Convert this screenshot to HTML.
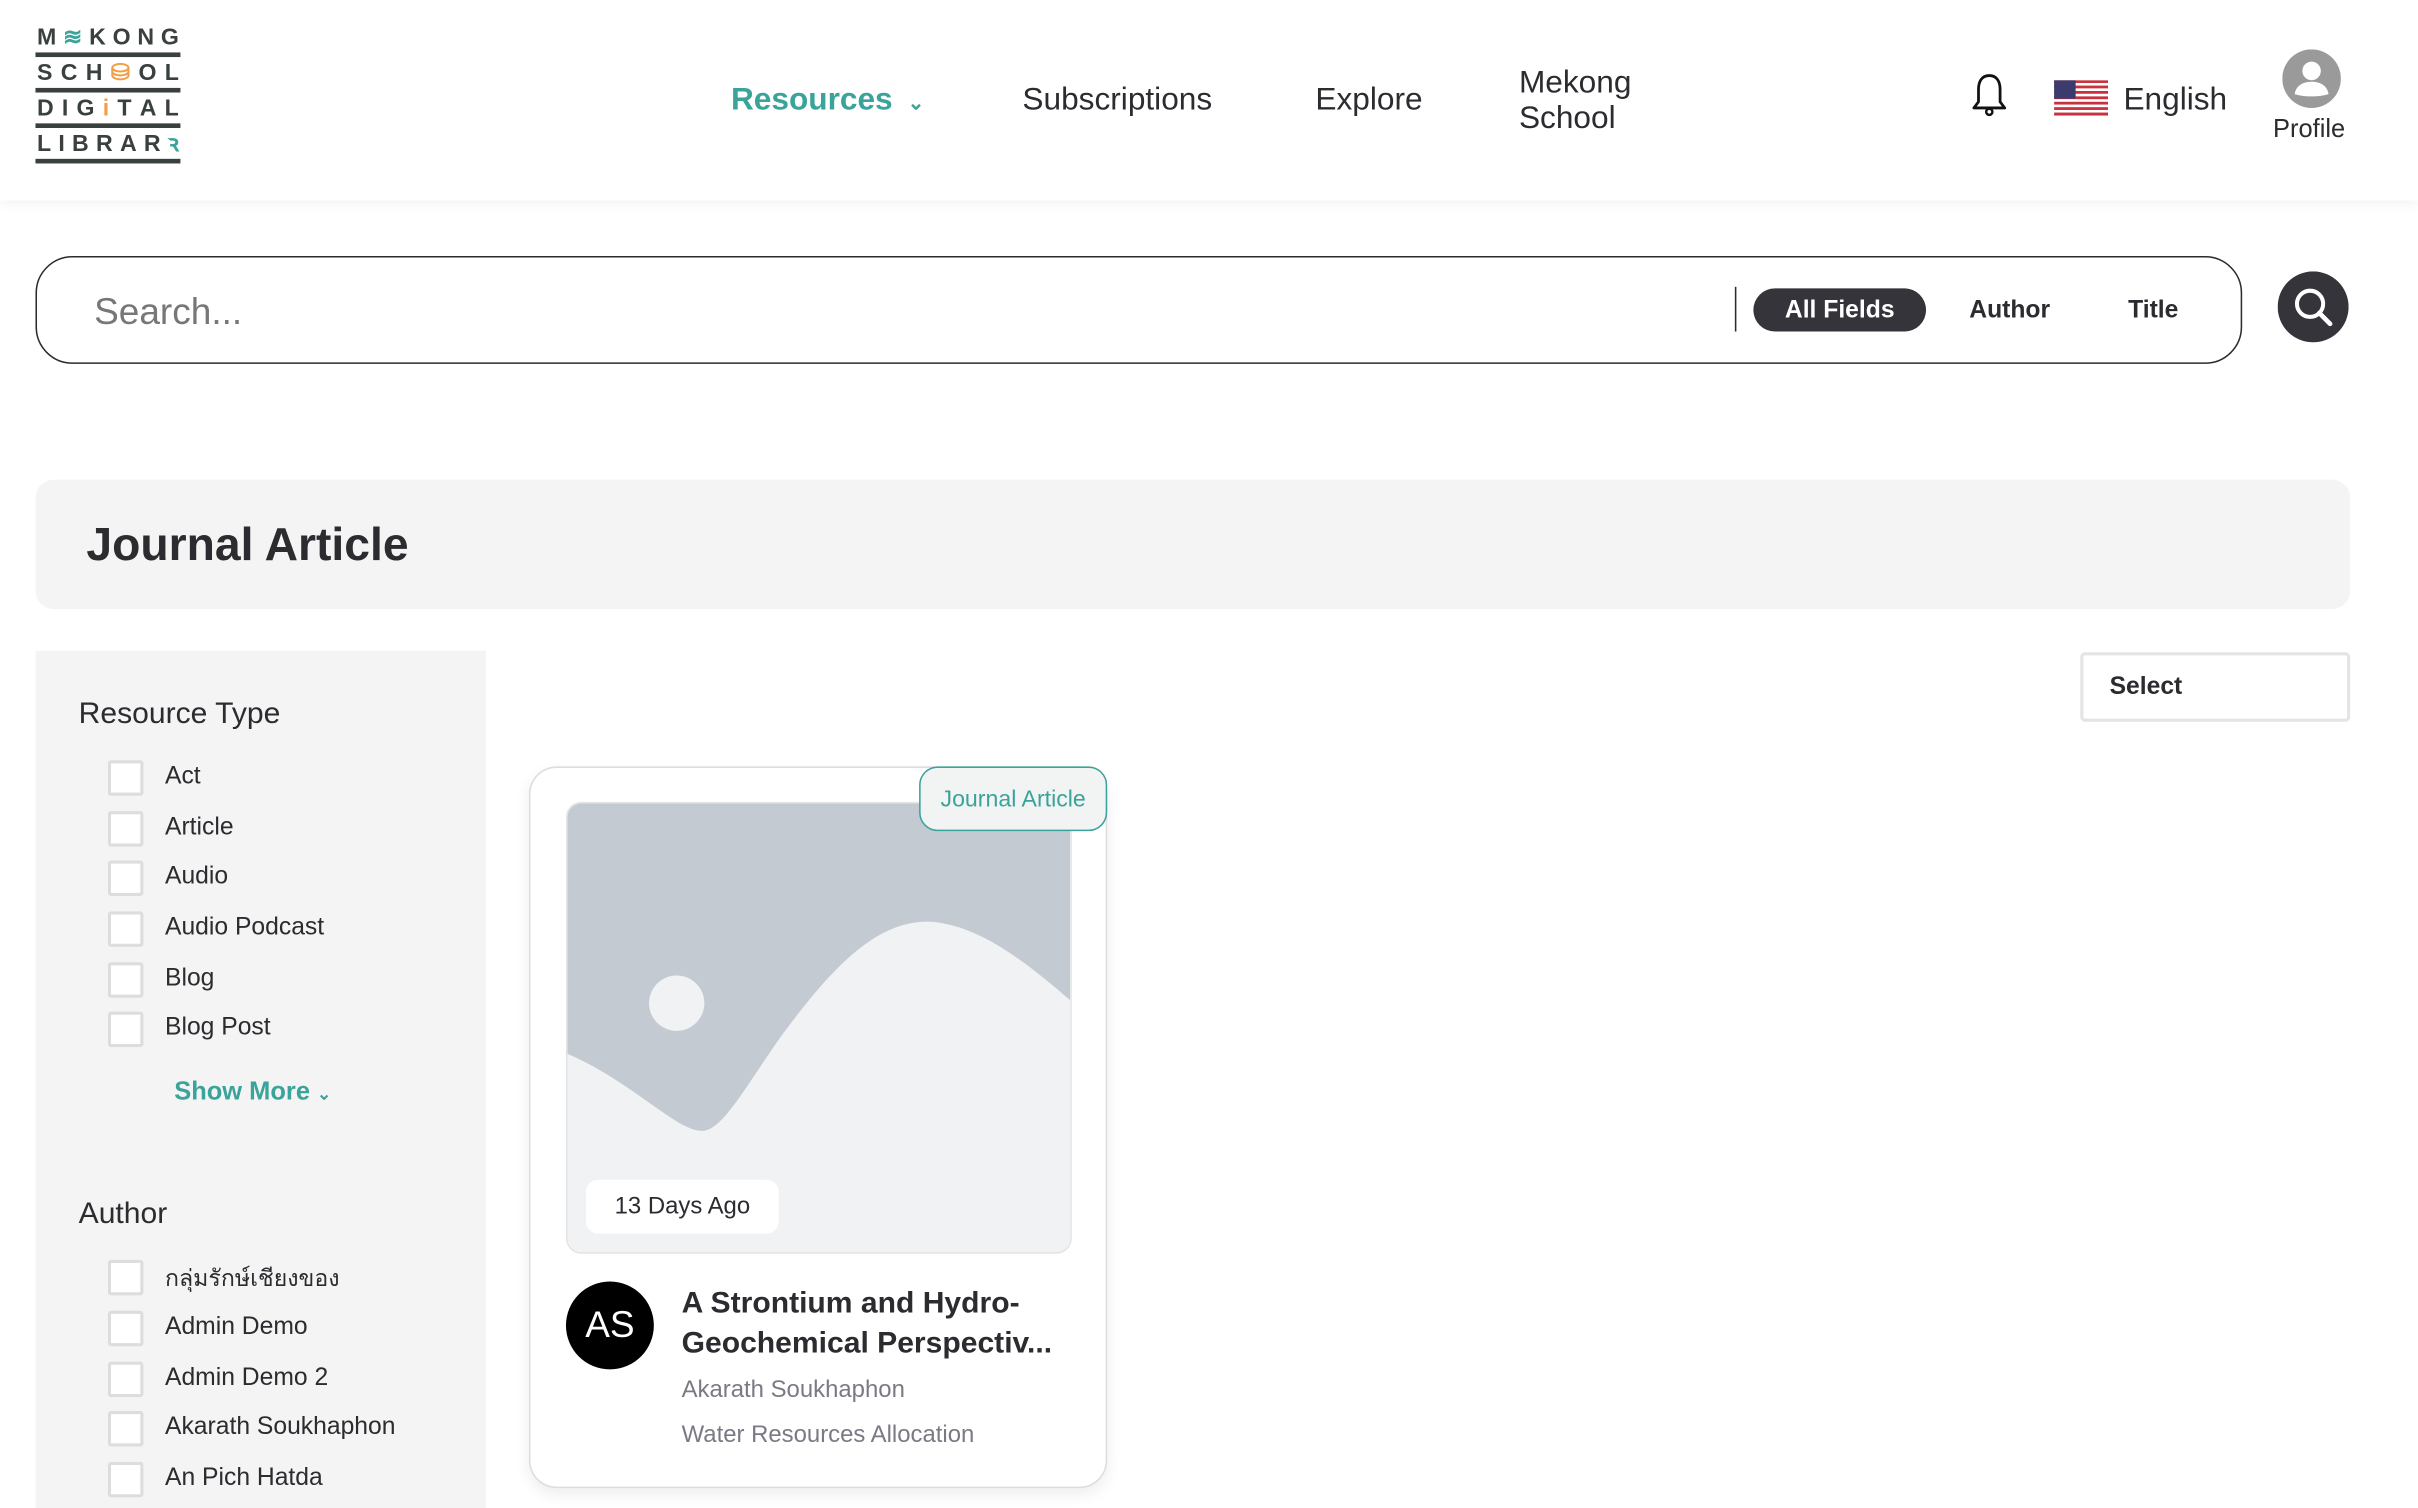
<!DOCTYPE html>
<html><head><meta charset="utf-8"><style>
*{box-sizing:border-box;margin:0;padding:0}
html,body{width:2418px;height:1508px;overflow:hidden;background:#fff}
#w{position:absolute;left:0;top:0;width:1568px;height:978px;transform:scale(1.54209);transform-origin:0 0;font-family:"Liberation Sans","Noto Sans CJK SC",sans-serif;color:#2b2b30}
.a{position:absolute;white-space:nowrap}
.hdr{position:absolute;left:0;top:0;width:1568px;height:130px;background:#fff;box-shadow:0 2px 8px rgba(0,0,0,.06)}
.logo{position:absolute;left:23px;top:16px;width:94px}
.row{display:flex;justify-content:space-between;font-weight:bold;font-size:15px;color:#3a3f3f;height:17px;line-height:17px;padding:0 1px}
.ln{height:3px;background:#3a3f3f;margin:1px 0 2px}
.nav{font-size:20.5px;color:#2b2b30}
.cb{position:absolute;left:70px;width:23px;height:23px;background:#fff;border:2px solid #ddd;border-radius:2px}
.lb{position:absolute;left:107px;font-size:16px;color:#2b2b30;white-space:nowrap}
</style></head><body><div id="w">
<div class="hdr"></div>
<div class="logo">
<div class="row"><span>M</span><span style="color:#3aa39a">≋</span><span>K</span><span>O</span><span>N</span><span>G</span></div><div class="ln"></div>
<div class="row"><span>S</span><span>C</span><span>H</span><span style="color:#f0a04b">⛁</span><span>O</span><span>L</span></div><div class="ln"></div>
<div class="row"><span>D</span><span>I</span><span>G</span><span style="color:#f0a04b">i</span><span>T</span><span>A</span><span>L</span></div><div class="ln"></div>
<div class="row"><span>L</span><span>I</span><span>B</span><span>R</span><span>A</span><span>R</span><span style="color:#3aa39a">ꝛ</span></div><div class="ln"></div>
</div>
<div class="a nav" style="left:474px;top:53px;color:#3aa39a;font-weight:bold">Resources <span style="font-size:13px;margin-left:4px">⌄</span></div>
<div class="a nav" style="left:663px;top:53px">Subscriptions</div>
<div class="a nav" style="left:853px;top:53px">Explore</div>
<div class="a nav" style="left:985px;top:42px;line-height:23px">Mekong<br>School</div>
<svg class="a" style="left:1277px;top:47px" width="26" height="30" viewBox="0 0 26 30"><path d="M13 2C8 2 6 6 6 11v8l-3 4h20l-3-4v-8c0-5-2-9-7-9z" fill="none" stroke="#111" stroke-width="1.8" stroke-linejoin="round"/><circle cx="13" cy="25.5" r="2" fill="none" stroke="#111" stroke-width="1.6"/></svg>
<svg class="a" style="left:1332px;top:52px" width="35" height="23" viewBox="0 0 35 23"><rect width="35" height="23" fill="#fff"/><g fill="#c8313e"><rect y="0" width="35" height="1.8"/><rect y="3.5" width="35" height="1.8"/><rect y="7" width="35" height="1.8"/><rect y="10.5" width="35" height="1.8"/><rect y="14" width="35" height="1.8"/><rect y="17.5" width="35" height="1.8"/><rect y="21" width="35" height="2"/></g><rect width="14" height="12" fill="#3c3b6e"/></svg>
<div class="a nav" style="left:1377px;top:53px">English</div>
<svg class="a" style="left:1480px;top:32px" width="38" height="38" viewBox="0 0 38 38"><circle cx="19" cy="19" r="19" fill="#9a9a9a"/><circle cx="19" cy="14" r="6" fill="#fff"/><path d="M8 29c1-6 6-8 11-8s10 2 11 8c-6 2-16 2-22 0z" fill="#fff"/></svg>
<div class="a" style="left:1474px;top:75px;font-size:16.5px">Profile</div>

<div class="a" style="left:23px;top:166px;width:1431px;height:70px;border:1px solid #2b2b30;border-radius:24px"></div>
<div class="a" style="left:61px;top:189px;font-size:24px;color:#777">Search...</div>
<div class="a" style="left:1125px;top:186px;width:1px;height:29px;background:#2b2b30"></div>
<div class="a" style="left:1137px;top:187px;width:112px;height:28px;border-radius:14px;background:#35343b;color:#fff;font-weight:bold;font-size:16px;text-align:center;line-height:29px">All Fields</div>
<div class="a" style="left:1277px;top:193px;font-weight:bold;font-size:16px">Author</div>
<div class="a" style="left:1380px;top:193px;font-weight:bold;font-size:16px">Title</div>
<svg class="a" style="left:1477px;top:176px" width="46" height="46" viewBox="0 0 46 46"><circle cx="23" cy="23" r="23" fill="#35343b"/><circle cx="21" cy="21" r="8.5" fill="none" stroke="#fff" stroke-width="2.6"/><path d="M27 27l7 7" stroke="#fff" stroke-width="3" stroke-linecap="round"/></svg>

<div class="a" style="left:23px;top:311px;width:1501px;height:84px;background:#f4f4f4;border-radius:12px"></div>
<div class="a" style="left:56px;top:337px;font-size:30px;font-weight:bold;color:#2b2b30">Journal Article</div>

<div class="a" style="left:23px;top:422px;width:292px;height:556px;background:#f4f4f4"></div>
<div class="a" style="left:51px;top:452px;font-size:19.5px">Resource Type</div>
<div class="cb" style="top:493px"></div><div class="lb" style="top:495px">Act</div>
<div class="cb" style="top:526px"></div><div class="lb" style="top:528px">Article</div>
<div class="cb" style="top:558px"></div><div class="lb" style="top:560px">Audio</div>
<div class="cb" style="top:591px"></div><div class="lb" style="top:593px">Audio Podcast</div>
<div class="cb" style="top:624px"></div><div class="lb" style="top:626px">Blog</div>
<div class="cb" style="top:656px"></div><div class="lb" style="top:658px">Blog Post</div>
<div class="a" style="left:113px;top:699px;font-size:16.5px;font-weight:bold;color:#3aa39a">Show More <span style="font-size:11px">⌄</span></div>
<div class="a" style="left:51px;top:776px;font-size:19.5px">Author</div>
<div class="cb" style="top:817px"></div><div class="lb" style="top:817px;font-size:15px">กลุ่มรักษ์เชียงของ</div>
<div class="cb" style="top:850px"></div><div class="lb" style="top:852px">Admin Demo</div>
<div class="cb" style="top:883px"></div><div class="lb" style="top:885px">Admin Demo 2</div>
<div class="cb" style="top:915px"></div><div class="lb" style="top:917px">Akarath Soukhaphon</div>
<div class="cb" style="top:948px"></div><div class="lb" style="top:950px">An Pich Hatda</div>

<div class="a" style="left:1349px;top:423px;width:175px;height:45px;border:2px solid #e4e4e4;border-radius:3px;background:#fff"></div>
<div class="a" style="left:1368px;top:437px;font-size:16px;font-weight:bold">Select</div>

<div class="a" style="left:343px;top:497px;width:375px;height:468px;border:1px solid #ddd;border-radius:18px;background:#fff;box-shadow:0 4px 10px rgba(0,0,0,.07)"></div>
<svg class="a" style="left:367px;top:520px;border-radius:10px;border:1px solid #e3e3e3" width="328" height="293" viewBox="0 0 327 292"><rect width="327" height="292" fill="#f1f2f4"/><path d="M0 0H327V128C300 105 270 80 237 77C200 75 170 110 140 150C115 185 100 215 86 213C70 212 40 180 0 163Z" fill="#c4cad1"/><circle cx="71" cy="130" r="18" fill="#f1f2f4"/></svg>
<div class="a" style="left:596px;top:497px;width:122px;height:42px;border:1px solid #3aa39a;border-radius:12px;background:#f2f3f3;color:#3aa39a;font-size:15px;text-align:center;line-height:42px">Journal Article</div>
<div class="a" style="left:380px;top:765px;width:125px;height:35px;background:#fff;border-radius:8px;font-size:15.5px;text-align:center;line-height:36px">13 Days Ago</div>
<div class="a" style="left:367px;top:831px;width:57px;height:57px;border-radius:50%;background:#000;color:#fff;font-size:24px;text-align:center;line-height:57px">AS</div>
<div class="a" style="left:442px;top:832px;font-size:19.5px;font-weight:bold;line-height:26px;color:#2b2b30">A Strontium and Hydro-<br>Geochemical Perspectiv...</div>
<div class="a" style="left:442px;top:893px;font-size:15.5px;color:#7a7a85">Akarath Soukhaphon</div>
<div class="a" style="left:442px;top:922px;font-size:15.5px;color:#7a7a85">Water Resources Allocation</div>
</div></body></html>
